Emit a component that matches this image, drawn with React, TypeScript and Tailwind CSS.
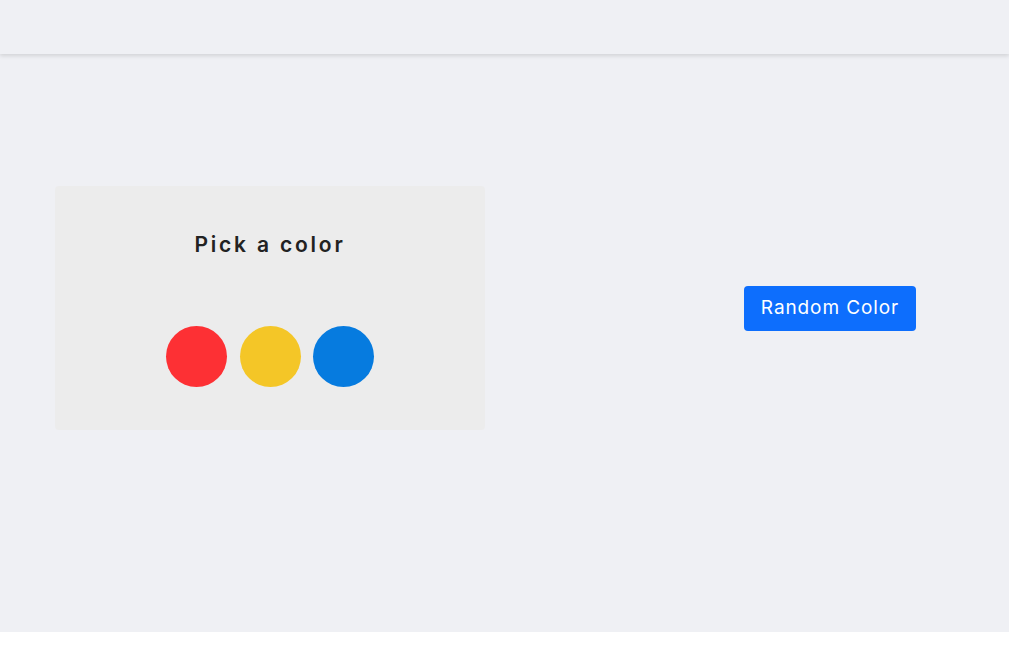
import React from 'react';

const colors = ['bg-[#fd3034]', 'bg-[#f4c627]', 'bg-[#067bdf]'];

const App = () => {
  return (
    <div className="w-full bg-white font-['Inter',sans-serif]">
      <header className="h-[54px] bg-[#eff0f4] shadow-[0_2px_4px_rgba(0,0,0,0.12)] relative z-10" />

      <main className="h-[578px] bg-[#eff0f4] flex items-center pb-[70px]">
        <div className="ml-[55px] w-[430px] h-[244px] rounded bg-[#ececec] flex flex-col items-center">
          <h2 className="mt-[45px] text-[21px] leading-[28px] font-semibold tracking-[2.8px] text-[#222]">
            Pick a color
          </h2>
          <div className="mt-[67px] flex gap-[12.5px]">
            {colors.map((c) => (
              <div key={c} className={`w-[61px] h-[61px] rounded-full ${c}`} />
            ))}
          </div>
        </div>

        <button className="ml-[259px] w-[172px] h-[45px] rounded bg-[#0d6efd] text-white text-[19px] tracking-[0.9px]">
          Random Color
        </button>
      </main>
    </div>
  );
};

export default App;
